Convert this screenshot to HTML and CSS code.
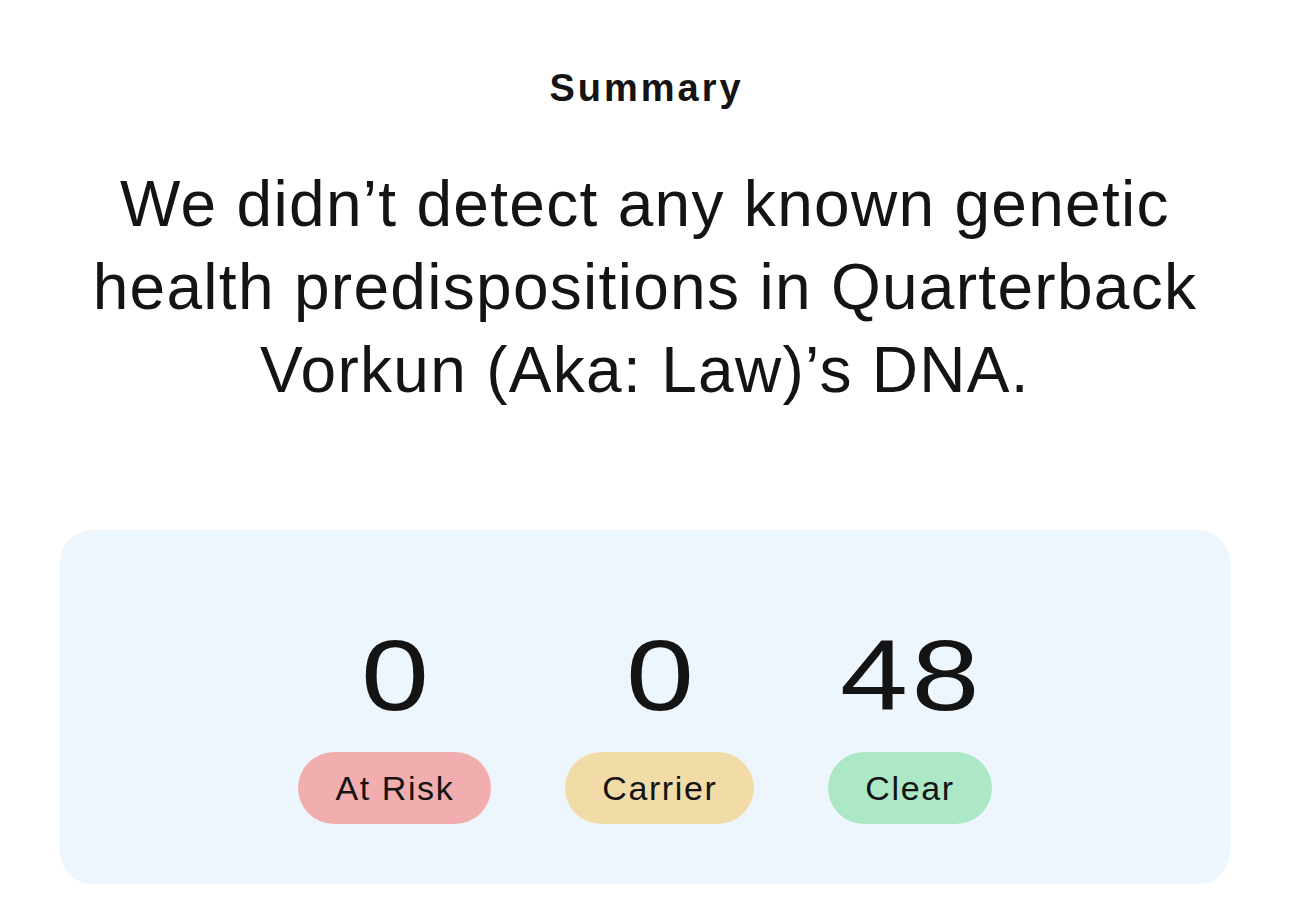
FILE: index.html
```html
<!DOCTYPE html>
<html lang="en">
<head>
<meta charset="utf-8">
<link rel="stylesheet" href="styles.css">
</head>
<body>
<main class="page">
  <h2 class="title">Summary</h2>
  <p class="headline">We didn’t detect any known genetic<br>health predispositions in Quarterback<br>Vorkun (Aka: Law)’s DNA.</p>
  <section class="card">
    <div class="stats">
      <div class="stat">
        <div class="num"><span class="digits">0</span></div>
        <div class="pill risk">At Risk</div>
      </div>
      <div class="stat">
        <div class="num"><span class="digits">0</span></div>
        <div class="pill carrier">Carrier</div>
      </div>
      <div class="stat">
        <div class="num"><span class="digits">48</span></div>
        <div class="pill clear">Clear</div>
      </div>
    </div>
  </section>
</main>
</body>
</html>
```
FILE: styles.css
```css
html, body {
  margin: 0;
  padding: 0;
  background: #ffffff;
}
body {
  font-family: "Liberation Sans", Arial, sans-serif;
  color: #141414;
}
.page {
  width: 1290px;
  height: 917px;
  box-sizing: border-box;
  padding: 63px 60px 0;
  display: flex;
  flex-direction: column;
  align-items: center;
}
.title {
  margin: 0;
  font-size: 38px;
  font-weight: 700;
  line-height: 50px;
  letter-spacing: 3px;
  padding-left: 3px;
}
.headline {
  margin: 50px 0 0;
  font-size: 64px;
  line-height: 83px;
  font-weight: 400;
  text-align: center;
  letter-spacing: 1.3px;
}
.card {
  margin-top: 118px;
  width: 1170px;
  height: 354px;
  box-sizing: border-box;
  background: #eef6fd;
  border-radius: 32px;
  display: flex;
  justify-content: center;
  padding-top: 86px;
}
.stats {
  display: flex;
  gap: 74px;
  align-items: flex-start;
}
.stat {
  display: flex;
  flex-direction: column;
  align-items: center;
}
.num {
  font-family: "Liberation Sans", sans-serif;
  font-size: 101px;
  line-height: 118px;
  height: 118px;
  font-weight: 400;
}
.digits {
  display: inline-block;
  letter-spacing: 3px;
  padding-left: 3px;
  transform: scaleX(1.21);
}
.pill {
  margin-top: 18px;
  height: 72px;
  border-radius: 36px;
  padding: 0 37px;
  display: flex;
  align-items: center;
  font-size: 34px;
  letter-spacing: 1.6px;
}
.risk { background: #f2aeae; }
.carrier { background: #f1dca8; }
.clear { background: #ace8c6; }
```
